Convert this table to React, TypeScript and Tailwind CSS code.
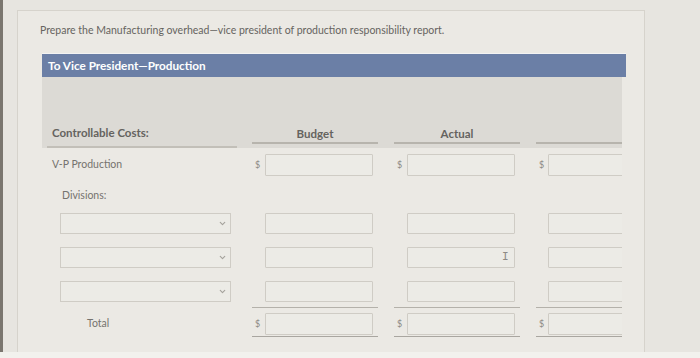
import { ChevronDown } from "lucide-react";

const Box = ({ w, h }: { w: string; h: string }) => (
  <div className={`${w} ${h} border border-[#cfccc5] bg-[#ecebe6] rounded-[1px]`} />
);

// one money column: optional "$", then the input box
const Cell = ({ dollar, last, h }: { dollar?: boolean; last?: boolean; h: string }) => (
  <div className="w-[126px] flex items-center shrink-0">
    <span className="w-[13px] pl-[3px] text-[9px] text-[#8a8883]">{dollar ? "$" : ""}</span>
    <Box w={last ? "w-[130px]" : "w-[108px]"} h={h} />
  </div>
);

const MoneyCols = ({ dollar, h = "h-[22px]" }: { dollar?: boolean; h?: string }) => (
  <div className="flex gap-[16px]">
    <Cell dollar={dollar} h={h} />
    <Cell dollar={dollar} h={h} />
    <Cell dollar={dollar} h={h} last />
  </div>
);

const ColLines = ({ color = "border-[#b4b1aa]" }: { color?: string }) => (
  <div className="flex gap-[16px]">
    <div className={`w-[126px] border-b ${color}`} />
    <div className={`w-[126px] border-b ${color}`} />
    <div className={`w-[126px] border-b ${color}`} />
  </div>
);

const SelectBox = () => (
  <div className="w-[171px] h-[21px] ml-[18px] border border-[#cfccc5] bg-[#ecebe6] flex items-center justify-end pr-[3px]">
    <ChevronDown className="w-[9px] h-[9px] text-[#a5a29c]" strokeWidth={3} />
  </div>
);

export default function App() {
  return (
    <div className="w-[700px] h-[358px] flex flex-col overflow-hidden bg-[#e7e5e0] font-['Lato',sans-serif]">
      <div className="flex h-[352px]">
        <div className="w-[3px] bg-[#7b766f]" />
        <div className="flex-1 pl-[14px] pt-[10px]">
          <div className="w-[628px] h-[360px] border border-[#d6d3cc] bg-[#ebe9e4] pl-[22px] pt-[12px]">
            <p className="text-[10.5px] leading-[14px] text-[#666460]">
              Prepare the Manufacturing overhead—vice president of production responsibility report.
            </p>

            <div className="ml-[2px] mt-[16px] w-[584px] h-[24px] bg-[#6b7fa6] border-t border-[#f3f3f3] flex items-center pl-[6px]">
              <span className="text-[11.75px] font-bold text-white">To Vice President—Production</span>
            </div>

            <div className="ml-[2px] w-[580px] overflow-hidden">
              {/* column headings */}
              <div className="h-[71px] bg-[#dcdad5] flex items-end">
                <div className="w-[210px] shrink-0 pl-[5px]">
                  <div className="w-[190px] border-b-2 border-[#c2bfb8] pl-[5px] pb-[5px] text-[11.5px] font-bold text-[#65635f]">
                    Controllable Costs:
                  </div>
                </div>
                <div className="flex gap-[16px] pb-[4px]">
                  <div className="w-[126px] border-b-2 border-[#b7b4ad] text-center text-[11.5px] leading-[16px] font-bold text-[#65635f]">
                    Budget
                  </div>
                  <div className="w-[126px] border-b-2 border-[#b7b4ad] text-center text-[11.5px] leading-[16px] font-bold text-[#65635f]">
                    Actual
                  </div>
                  <div className="w-[126px] border-b-2 border-[#b7b4ad] text-[11.5px] leading-[16px]">&nbsp;</div>
                </div>
              </div>

              {/* V-P Production */}
              <div className="mt-[6px] flex items-center">
                <div className="w-[210px] shrink-0 pl-[10px] text-[10.5px] text-[#75736e]">V-P Production</div>
                <MoneyCols dollar />
              </div>

              <div className="mt-[11px] h-[16px] pl-[20px] text-[10.5px] leading-[16px] text-[#75736e]">Divisions:</div>

              {/* division rows */}
              <div className="mt-[10px] flex flex-col gap-[13px]">
                {[0, 1, 2].map((i) => (
                  <div key={i} className="flex items-center h-[21px]">
                    <div className="w-[210px] shrink-0">
                      <SelectBox />
                    </div>
                    <div className="relative">
                      <MoneyCols h="h-[21px]" />
                      {i === 1 && (
                        <span className="absolute left-[250px] top-[2px] text-[11px] font-['DejaVu_Sans_Mono',monospace] text-[#8d8a85]">
                          I
                        </span>
                      )}
                    </div>
                  </div>
                ))}
              </div>

              <div className="mt-[5px] flex">
                <div className="w-[210px] shrink-0" />
                <ColLines />
              </div>

              {/* Total */}
              <div className="mt-[5px] flex items-center">
                <div className="w-[210px] shrink-0 pl-[45px] text-[10.5px] text-[#75736e]">Total</div>
                <MoneyCols dollar />
              </div>
              <div className="mt-[1px] flex">
                <div className="w-[210px] shrink-0" />
                <ColLines color="border-[#a9a6a0]" />
              </div>
            </div>
          </div>
        </div>
      </div>
      <div className="h-[6px] bg-[#f2f1ed]" />
    </div>
  );
}
